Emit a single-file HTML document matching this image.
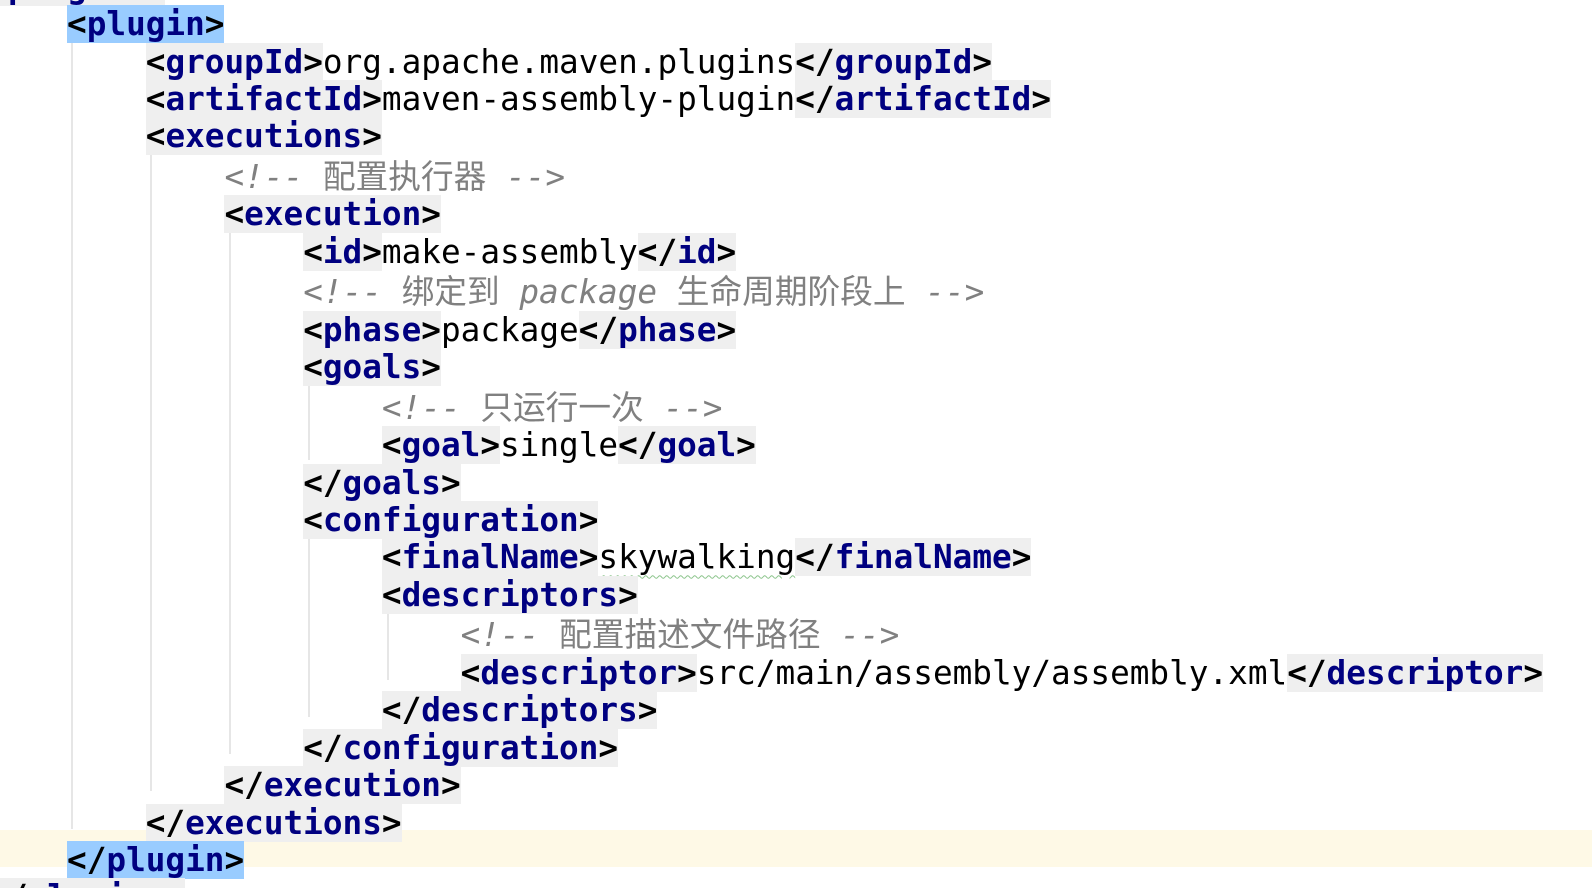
<!DOCTYPE html>
<html><head><meta charset="utf-8"><style>
html,body{margin:0;padding:0;width:1592px;height:888px;overflow:hidden;background:#fff;position:relative}
.cur{position:absolute;left:0;top:829.5px;width:1592px;height:37.45px;background:#fef9e6}
.g{position:absolute;width:2px;background:#e6e6e6}
pre{position:absolute;left:-11.7px;top:-31.4px;margin:0;font-family:"DejaVu Sans Mono","Liberation Mono","Noto Sans CJK SC",monospace;font-size:32.7px;line-height:37.45px;color:#000}
.t{background:#efefef;font-weight:bold}
.s{background:#99ccff;font-weight:bold}
.t b,.s b{color:#000080}
.c{color:#808080;font-style:italic}
.c span{font-style:normal;font-family:"Noto Sans CJK SC",sans-serif}
.w{text-decoration:underline wavy #8bc48b;text-decoration-thickness:1px;text-underline-offset:6px}
</style></head><body>
<div class="cur"></div>
<div class="g" style="left:71px;top:43px;height:786px"></div>
<div class="g" style="left:150px;top:155px;height:636px"></div>
<div class="g" style="left:229px;top:230px;height:524px"></div>
<div class="g" style="left:308px;top:380px;height:80px"></div>
<div class="g" style="left:308px;top:530px;height:187px"></div>
<div class="g" style="left:387px;top:605px;height:75px"></div>
<pre><span class="t">&lt;<b>plugins</b>&gt;</span>
    <span class="s">&lt;<b>plugin</b>&gt;</span>
        <span class="t">&lt;<b>groupId</b>&gt;</span>org.apache.maven.plugins<span class="t">&lt;/<b>groupId</b>&gt;</span>
        <span class="t">&lt;<b>artifactId</b>&gt;</span>maven-assembly-plugin<span class="t">&lt;/<b>artifactId</b>&gt;</span>
        <span class="t">&lt;<b>executions</b>&gt;</span>
            <span class="c">&lt;!-- <span>配置执行器</span> --&gt;</span>
            <span class="t">&lt;<b>execution</b>&gt;</span>
                <span class="t">&lt;<b>id</b>&gt;</span>make-assembly<span class="t">&lt;/<b>id</b>&gt;</span>
                <span class="c">&lt;!-- <span>绑定到</span> package <span>生命周期阶段上</span> --&gt;</span>
                <span class="t">&lt;<b>phase</b>&gt;</span>package<span class="t">&lt;/<b>phase</b>&gt;</span>
                <span class="t">&lt;<b>goals</b>&gt;</span>
                    <span class="c">&lt;!-- <span>只运行一次</span> --&gt;</span>
                    <span class="t">&lt;<b>goal</b>&gt;</span>single<span class="t">&lt;/<b>goal</b>&gt;</span>
                <span class="t">&lt;/<b>goals</b>&gt;</span>
                <span class="t">&lt;<b>configuration</b>&gt;</span>
                    <span class="t">&lt;<b>finalName</b>&gt;</span><span class="w">skywalking</span><span class="t">&lt;/<b>finalName</b>&gt;</span>
                    <span class="t">&lt;<b>descriptors</b>&gt;</span>
                        <span class="c">&lt;!-- <span>配置描述文件路径</span> --&gt;</span>
                        <span class="t">&lt;<b>descriptor</b>&gt;</span>src/main/assembly/assembly.xml<span class="t">&lt;/<b>descriptor</b>&gt;</span>
                    <span class="t">&lt;/<b>descriptors</b>&gt;</span>
                <span class="t">&lt;/<b>configuration</b>&gt;</span>
            <span class="t">&lt;/<b>execution</b>&gt;</span>
        <span class="t">&lt;/<b>executions</b>&gt;</span>
    <span class="s">&lt;/<b>plugin</b>&gt;</span>
<span class="t">&lt;/<b>plugins</b>&gt;</span></pre>
</body></html>
